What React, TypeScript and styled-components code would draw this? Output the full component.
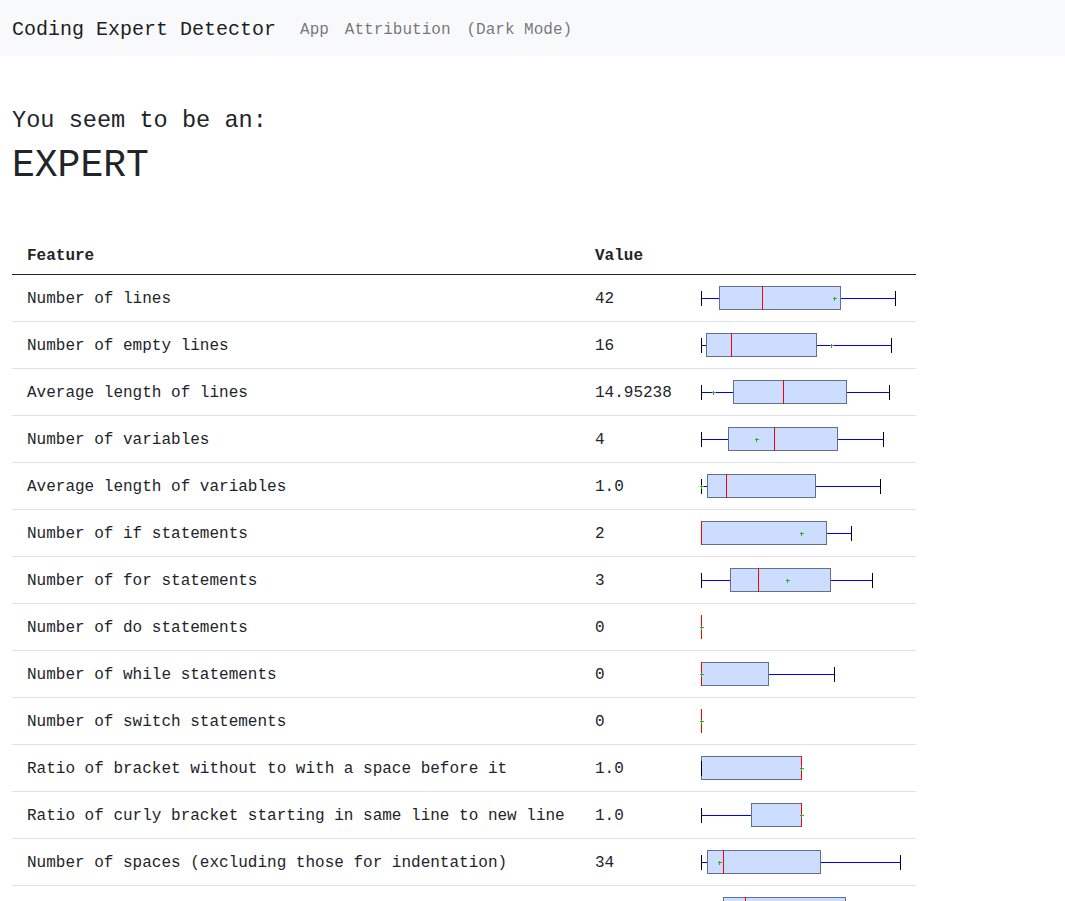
import React from "react";
import styled, { createGlobalStyle } from "styled-components";

const GlobalStyle = createGlobalStyle`
  html, body {
    margin: 0;
    padding: 0;
    background: #ffffff;
  }
  body {
    font-family: "Liberation Mono", "DejaVu Sans Mono", monospace;
    font-size: 16px;
    line-height: 1.5;
    color: #212529;
  }
  * { box-sizing: border-box; }
`;

const Navbar = styled.nav`
  height: 56px;
  background: #f8f9fa;
  display: flex;
  align-items: center;
  padding: 4px 12px 0;
`;

const Brand = styled.span`
  font-size: 20px;
  line-height: 30px;
  color: rgba(0, 0, 0, 0.9);
  margin-right: 16px;
`;

const NavLink = styled.a`
  font-size: 16px;
  line-height: 24px;
  color: rgba(0, 0, 0, 0.55);
  padding: 0 8px;
  text-decoration: none;
  cursor: pointer;
`;

const Main = styled.main`
  padding: 51px 12px 0;
`;

const Lead = styled.h4`
  margin: 0 0 8px;
  font-size: 23.6px;
  line-height: 1.2;
  font-weight: 500;
`;

const Verdict = styled.h1`
  margin: 0 0 8px;
  font-size: 38px;
  line-height: 1.2;
  font-weight: 500;
`;

const Table = styled.table`
  margin-top: 39px;
  width: 904px;
  table-layout: fixed;
  border-collapse: collapse;
`;

const HeadCell = styled.th`
  text-align: left;
  font-weight: 700;
  padding: 16px 15px 6px;
  line-height: 24px;
  border-bottom: 1px solid #212529;
`;

const Cell = styled.td`
  padding: 12px 15px 10px;
  line-height: 24px;
  border-bottom: 1px solid #dee2e6;
  vertical-align: top;
  white-space: nowrap;
`;

const PlotCell = styled(Cell)`
  padding: 11px 0 11px 14px;
`;

const PlotSvg = styled.svg`
  display: block;
  overflow: visible;
`;

type Plot = {
  capL?: number;
  boxL?: number;
  boxR?: number;
  med: number;
  mean: number;
  capR?: number;
};

type Row = { feature: string; value: string; plot: Plot };

const rows: Row[] = [
  { feature: "Number of lines", value: "42", plot: { capL: 701, boxL: 719, med: 762, mean: 834, boxR: 840, capR: 895 } },
  { feature: "Number of empty lines", value: "16", plot: { capL: 701, boxL: 706, med: 731, mean: 831, boxR: 816, capR: 891 } },
  { feature: "Average length of lines", value: "14.95238", plot: { capL: 701, boxL: 733, med: 783, mean: 713, boxR: 846, capR: 889 } },
  { feature: "Number of variables", value: "4", plot: { capL: 701, boxL: 728, med: 774, mean: 756, boxR: 837, capR: 883 } },
  { feature: "Average length of variables", value: "1.0", plot: { capL: 701, boxL: 707, med: 726, mean: 701, boxR: 815, capR: 880 } },
  { feature: "Number of if statements", value: "2", plot: { boxL: 701, med: 701, mean: 801, boxR: 826, capR: 851 } },
  { feature: "Number of for statements", value: "3", plot: { capL: 701, boxL: 730, med: 758, mean: 787, boxR: 830, capR: 872 } },
  { feature: "Number of do statements", value: "0", plot: { med: 701, mean: 701 } },
  { feature: "Number of while statements", value: "0", plot: { boxL: 701, med: 701, mean: 701, boxR: 768, capR: 834 } },
  { feature: "Number of switch statements", value: "0", plot: { med: 701, mean: 701 } },
  { feature: "Ratio of bracket without to with a space before it", value: "1.0", plot: { capL: 701, boxL: 701, med: 801, mean: 801, boxR: 801 } },
  { feature: "Ratio of curly bracket starting in same line to new line", value: "1.0", plot: { capL: 701, boxL: 751, med: 801, mean: 801, boxR: 801 } },
  { feature: "Number of spaces (excluding those for indentation)", value: "34", plot: { capL: 701, boxL: 707, med: 723, mean: 719, boxR: 820, capR: 900 } },
  { feature: "Number of tabs", value: "0", plot: { capL: 701, boxL: 723, med: 745, mean: 760, boxR: 845, capR: 898 } },
];

const X = (p: number) => p - 701 + 0.5;

const BoxPlot: React.FC<{ plot: Plot }> = ({ plot }) => {
  const { capL, boxL, boxR, med, mean, capR } = plot;
  const mid = 12.5;
  const m = X(mean);
  return (
    <PlotSvg width={215} height={24} viewBox="0 0 215 24" shapeRendering="crispEdges">
      {capL !== undefined && boxL !== undefined && boxL > capL && (
        <line x1={X(capL)} x2={X(boxL)} y1={mid} y2={mid} stroke="#0000ff" strokeWidth={1} />
      )}
      {capR !== undefined && boxR !== undefined && (
        <line x1={X(boxR)} x2={X(capR)} y1={mid} y2={mid} stroke="#0000ff" strokeWidth={1} />
      )}
      {boxL !== undefined && boxR !== undefined && (
        <rect
          x={X(boxL)}
          y={0.5}
          width={boxR - boxL}
          height={23}
          fill="#ccddff"
          stroke="#64708a"
          strokeWidth={1}
        />
      )}
      {capL !== undefined && (
        <line x1={X(capL)} x2={X(capL)} y1={5} y2={20} stroke="#000000" strokeWidth={1} />
      )}
      {capR !== undefined && (
        <line x1={X(capR)} x2={X(capR)} y1={5} y2={20} stroke="#000000" strokeWidth={1} />
      )}
      <line x1={X(med)} x2={X(med)} y1={0} y2={24} stroke="#ff0000" strokeWidth={1} />
      <line x1={m - 2} x2={m + 2} y1={mid} y2={mid} stroke="#33aa22" strokeWidth={1} />
      <line x1={m} x2={m} y1={mid - 2} y2={mid + 2} stroke="#33aa22" strokeWidth={1} />
    </PlotSvg>
  );
};

export default function App() {
  return (
    <>
      <GlobalStyle />
      <Navbar>
        <Brand>Coding Expert Detector</Brand>
        <NavLink>App</NavLink>
        <NavLink>Attribution</NavLink>
        <NavLink>(Dark Mode)</NavLink>
      </Navbar>
      <Main>
        <Lead>You seem to be an:</Lead>
        <Verdict>EXPERT</Verdict>
        <Table>
          <colgroup>
            <col style={{ width: 568 }} />
            <col style={{ width: 107 }} />
            <col style={{ width: 229 }} />
          </colgroup>
          <thead>
            <tr>
              <HeadCell>Feature</HeadCell>
              <HeadCell>Value</HeadCell>
              <HeadCell />
            </tr>
          </thead>
          <tbody>
            {rows.map((r) => (
              <tr key={r.feature}>
                <Cell>{r.feature}</Cell>
                <Cell>{r.value}</Cell>
                <PlotCell>
                  <BoxPlot plot={r.plot} />
                </PlotCell>
              </tr>
            ))}
          </tbody>
        </Table>
      </Main>
    </>
  );
}
